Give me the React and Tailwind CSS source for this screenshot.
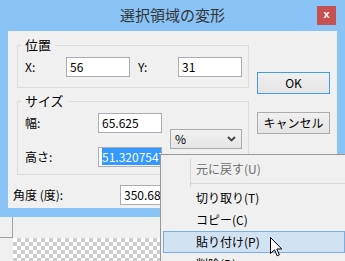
import React from 'react'

const jp = "font-['Noto_Sans_CJK_JP','Noto_Sans',sans-serif]"

function Box({ className = '', children }) {
	return (
		<div className={`h-[20px] w-[64px] border border-[#abadb3] bg-white pl-[3px] text-[12px] leading-[18px] text-black overflow-hidden whitespace-nowrap ${className}`}>
			{children}
		</div>
	)
}

function Group({ title, className = '', children }) {
	return (
		<fieldset className={`ml-[4px] w-[232px] border border-[#dcdcdc] ${className}`}>
			<legend className='ml-[3px] px-[4px] text-[13px] leading-[18px] text-black'>{title}</legend>
			{children}
		</fieldset>
	)
}

function Button({ label, primary }) {
	return (
		<div className={`w-[73px] h-[22px] flex items-center justify-center border bg-linear-to-b from-[#f0f0f0] to-[#e5e5e5] text-[12px] text-black ${primary ? 'border-[#3c9de8]' : 'border-[#acacac]'}`}>
			{label}
		</div>
	)
}

function MenuItem({ label, disabled, active }) {
	return (
		<div className={`h-[22px] flex items-center text-[12px] ${active ? 'ml-[2px] pl-[32px] bg-[#d1e2f2] border border-[#78aee5]' : 'pl-[35px]'} ${disabled ? 'text-[#6d6d6d]' : 'text-black'}`}>
			{label}
		</div>
	)
}

export default function App() {
	return (
		<div className={`relative w-[345px] h-[261px] overflow-hidden bg-[#f0f0f0] ${jp}`}>
			{/* dialog */}
			<div className='bg-[#8ac3f5] px-[8px] pb-[9px]'>
				<div className='h-[31px] grid grid-cols-[1fr_auto_1fr] items-center'>
					<div />
					<div className='text-[15px] text-[#333] leading-[20px] -mt-[1px]'>選択領域の変形</div>
					<div className='flex justify-end pr-[1px] self-start pt-[6px]'>
						<div className='w-[19px] h-[19px] bg-[#c75050] flex items-center justify-center text-white font-bold text-[11px] leading-none font-["Liberation_Sans",sans-serif] pb-[2px]'>x</div>
					</div>
				</div>

				<div className='h-[177px] bg-[#f0f0f0] flex pl-[5px] pt-[5px]'>
					<div className='w-[236px] flex flex-col'>
						<Group title='位置' className='h-[52px]'>
							<div className='mt-[3px] flex items-center h-[20px] text-[12px]'>
								<span className='pl-[7px] w-[48px]'>X:</span>
								<Box>56</Box>
								<span className='pl-[8px] w-[48px]'>Y:</span>
								<Box>31</Box>
							</div>
						</Group>

						<Group title='サイズ' className='mt-[4px] h-[83px]'>
							<div className='flex'>
								<div className='flex flex-col'>
									<div className='mt-[3px] flex items-center h-[20px] text-[12px]'>
										<span className='pl-[7px] w-[80px]'>幅:</span>
										<Box>65.625</Box>
									</div>
									<div className='mt-[14px] flex items-center h-[20px] text-[12px]'>
										<span className='pl-[7px] w-[80px]'>高さ:</span>
										<Box className='border-[#569de5] pl-[2px]'>
											<span className='bg-[#3399ff] text-white'>51.3207547</span>
										</Box>
									</div>
								</div>
								<div className='ml-[8px] mt-[19px] w-[72px] h-[20px] border border-[#acacac] bg-linear-to-b from-[#f2f2f2] to-[#e5e5e5] flex items-center justify-between pl-[4px] pr-[5px] text-[12px]'>
									<span>%</span>
									<svg width='9' height='6' viewBox='0 0 9 6'>
										<path d='M1 1 L4.5 4.5 L8 1' fill='none' stroke='#444' strokeWidth='1.8' />
									</svg>
								</div>
							</div>
						</Group>

						<div className='mt-[10px] flex items-center h-[19px] text-[12px]'>
							<span className='w-[107px]'>角度 (度):</span>
							<Box className='h-[19px] pl-[3px]'>350.6832</Box>
						</div>
					</div>

					<div className='ml-[8px] pt-[36px] flex flex-col gap-[18px]'>
						<Button label='OK' primary />
						<Button label='キャンセル' />
					</div>
				</div>
			</div>

			{/* area below dialog */}
			<div className='flex h-[44px]'>
				<div className='w-[13px] h-[21px] border-r border-b border-[#a0a0a0]' />
				<div className='flex-1 flex flex-col'>
					<div className='h-[21px]' />
					<div className='flex-1 bg-[conic-gradient(#cccccc_25%,#ffffff_0_50%,#cccccc_0_75%,#ffffff_0)] bg-[length:8px_8px]' />
				</div>
			</div>

			{/* context menu */}
			<div className='absolute left-[160px] top-[154px] right-0 bottom-[-30px] bg-[#f0f0f0] border-l border-t border-[#979797] pt-[3px]'>
				<div className='ml-[29px] border-l border-[#d7d7d7]'>
					<div className='h-[22px] flex items-center pl-[5px] text-[12px] text-[#6d6d6d]'>元に戻す(U)</div>
					<div className='h-[7px] pt-[3px]'>
						<div className='h-px bg-[#d7d7d7]' />
					</div>
				</div>
				<MenuItem label='切り取り(T)' />
				<MenuItem label='コピー(C)' />
				<MenuItem label='貼り付け(P)' active />
				<MenuItem label='削除(D)' />
			</div>

			{/* mouse pointer */}
			<svg className='absolute left-[270px] top-[237px]' width='13' height='20' viewBox='0 0 13 20'>
				<path d='M0.5 0.5 L0.5 16.5 L4.5 12.8 L7.2 18.8 L9.4 17.8 L6.8 12 L11.8 12 Z' fill='#fff' stroke='#000' strokeWidth='1' strokeLinejoin='miter' />
			</svg>
		</div>
	)
}
